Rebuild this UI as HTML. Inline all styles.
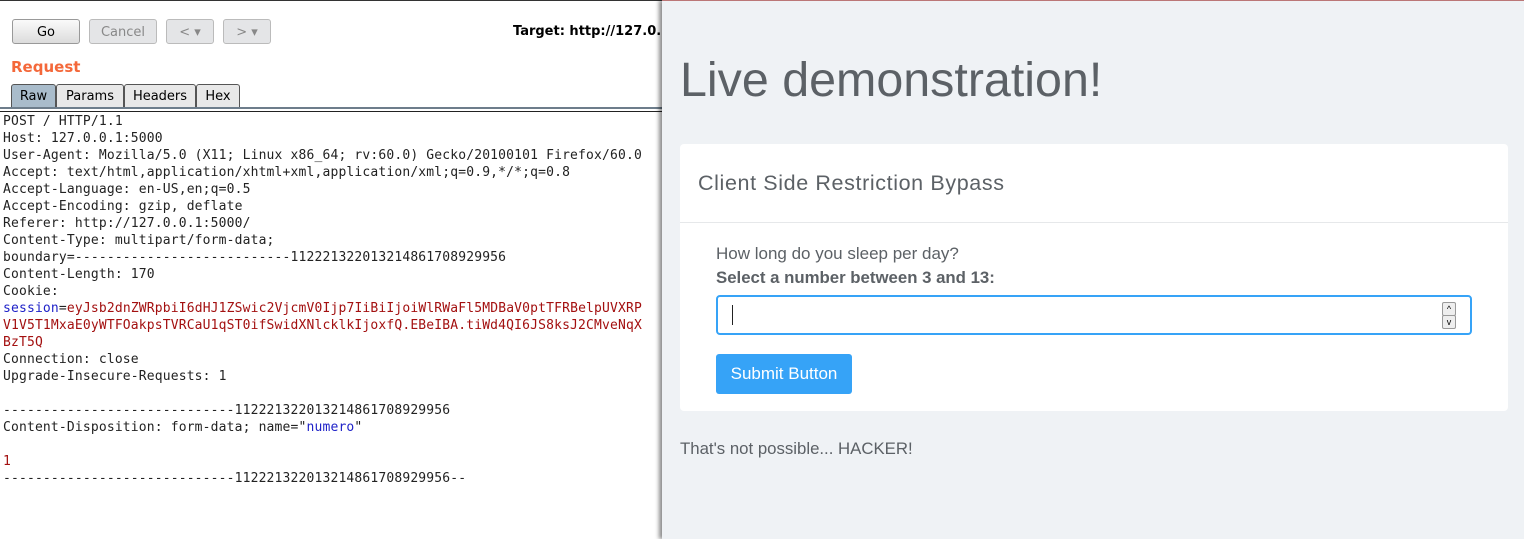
<!DOCTYPE html><html><head><style>
body{margin:0;width:1524px;height:538px;overflow:hidden;position:relative;background:#fff;font-family:"Liberation Sans",sans-serif}
.l{position:absolute;left:0;top:0;width:662px;height:538px;background:#fff;border-top:1px solid #333}
.btn{position:absolute;top:18px;height:25px;border:1px solid #999;border-radius:3px;background:linear-gradient(#fafafa,#dcdcdc);font:13px "DejaVu Sans",sans-serif;text-align:center;line-height:25px;box-sizing:border-box}
.dis{border-color:#bbb;background:#e4e5e7;color:#888}
.tab{position:absolute;top:83px;height:24px;border:1px solid #555;border-bottom:none;border-radius:3px 3px 0 0;background:#e8e8e8;font:13px "DejaVu Sans",sans-serif;line-height:24px;text-align:center;box-sizing:border-box}
pre{position:absolute;left:3px;top:112px;margin:0;font:13px/17px "DejaVu Sans Mono",monospace;letter-spacing:0.16px;color:#222}
.b{color:#1f22c8}.r{color:#a31010}
.rp{position:absolute;left:662px;top:0;width:862px;height:538px;background:#eff2f5;box-shadow:-3px 0 4px rgba(0,0,0,.45);border-top:1px solid #b77}
</style></head><body>
<div class="l">
<div class="btn" style="left:12px;width:68px">Go</div>
<div class="btn dis" style="left:89px;width:68px">Cancel</div>
<div class="btn dis" style="left:166px;width:48px">&lt; ▾</div>
<div class="btn dis" style="left:223px;width:48px">&gt; ▾</div>
<div style="position:absolute;left:513px;top:23px;font:bold 13px 'DejaVu Sans',sans-serif;white-space:nowrap">Target: http://127.0.</div>
<div style="position:absolute;left:11px;top:57px;font:bold 15px 'DejaVu Sans',sans-serif;color:#f4683a">Request</div>
<div class="tab" style="left:11px;width:45px;background:#a9bccb">Raw</div>
<div class="tab" style="left:56px;width:68px">Params</div>
<div class="tab" style="left:124px;width:72px">Headers</div>
<div class="tab" style="left:196px;width:44px">Hex</div>
<div style="position:absolute;left:0;top:106px;width:662px;height:2px;background:#6d7d8b"></div>
<div style="position:absolute;left:0;top:110px;width:662px;height:1px;background:#222"></div>
<pre>POST / HTTP/1.1
Host: 127.0.0.1:5000
User-Agent: Mozilla/5.0 (X11; Linux x86_64; rv:60.0) Gecko/20100101 Firefox/60.0
Accept: text/html,application/xhtml+xml,application/xml;q=0.9,*/*;q=0.8
Accept-Language: en-US,en;q=0.5
Accept-Encoding: gzip, deflate
Referer: http://127.0.0.1:5000/
Content-Type: multipart/form-data;
boundary=---------------------------112221322013214861708929956
Content-Length: 170
Cookie:
<span class="b">session</span>=<span class="r">eyJsb2dnZWRpbiI6dHJ1ZSwic2VjcmV0Ijp7IiBiIjoiWlRWaFl5MDBaV0ptTFRBelpUVXRP
V1V5T1MxaE0yWTFOakpsTVRCaU1qST0ifSwidXNlcklkIjoxfQ.EBeIBA.tiWd4QI6JS8ksJ2CMveNqX
BzT5Q</span>
Connection: close
Upgrade-Insecure-Requests: 1

-----------------------------112221322013214861708929956
Content-Disposition: form-data; name="<span class="b">numero</span>"

<span class="r">1</span>
-----------------------------112221322013214861708929956--</pre>
</div>
<div class="rp">
<div style="position:absolute;left:18px;top:51px;font-size:48.4px;color:#5c6166">Live demonstration!</div>
<div style="position:absolute;left:18px;top:143px;width:828px;height:267px;background:#fff;border-radius:4px">
<div style="height:78px;border-bottom:1px solid #e6e8ea;font-size:21.5px;color:#5c6166;line-height:78px;padding-left:18px;letter-spacing:.62px">Client Side Restriction Bypass</div>
<div style="position:absolute;left:36px;top:100px;font-size:17px;color:#5c6166">How long do you sleep per day?</div>
<div style="position:absolute;left:36px;top:124px;font-size:16.8px;color:#5c6166;font-weight:bold">Select a number between 3 and 13:</div>
<div style="position:absolute;left:36px;top:151px;width:756px;height:40px;border:2px solid #36a3f7;border-radius:4px;box-sizing:border-box">
<div style="position:absolute;left:14px;top:8px;width:1px;height:20px;background:#222"></div>
<div style="position:absolute;right:14px;top:5px;width:12px;height:12px;border:1px solid #999;border-radius:2px;background:#eee;font-size:9px;text-align:center;line-height:12px">^</div>
<div style="position:absolute;right:14px;top:18px;width:12px;height:12px;border:1px solid #999;border-radius:2px;background:#eee;font-size:9px;text-align:center;line-height:12px">v</div>
</div>
<div style="position:absolute;left:36px;top:210px;width:136px;height:40px;background:#36a3f7;border-radius:3px;color:#fff;font-size:17px;line-height:40px;text-align:center">Submit Button</div>
</div>
<div style="position:absolute;left:18px;top:438px;font-size:16.8px;color:#5c6166">That's not possible... HACKER!</div>
</div>
</body></html>
